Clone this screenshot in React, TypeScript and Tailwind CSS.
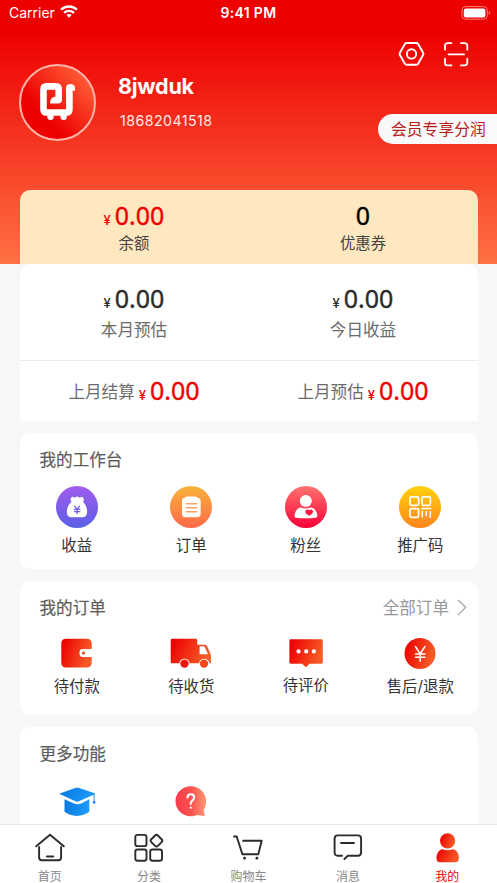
import type { ReactNode } from "react";

const latin = "font-['Inter','Noto_Sans_CJK_SC',sans-serif]";

function RedGradient({ id }: { id: string }) {
  return (
    <defs>
      <linearGradient id={id} x1="0" y1="0" x2="1" y2="0.3">
        <stop offset="0.1" stopColor="#ec0303" />
        <stop offset="1" stopColor="#f75a26" />
      </linearGradient>
    </defs>
  );
}

function VerticalGradient({ id, from, to }: { id: string; from: string; to: string }) {
  return (
    <defs>
      <linearGradient id={id} x1="0" y1="0" x2="0" y2="1">
        <stop offset="0" stopColor={from} />
        <stop offset="1" stopColor={to} />
      </linearGradient>
    </defs>
  );
}

function StatusBar() {
  return (
    <div className="grid h-[25px] grid-cols-3 items-center text-[14px] leading-[25px]">
      <div className="flex items-center gap-[5px] pl-[9px]">
        <span>Carrier</span>
        <svg width="18" height="13" viewBox="0 0 18 13" fill="none" stroke="#fff" className="-mt-[2px]">
          <path d="M1 4.7C5.4.4 12.6.4 17 4.7" strokeWidth="2.3" />
          <path d="M4 7.9c2.8-2.7 7.2-2.7 10 0" strokeWidth="2.2" />
          <path d="M9 12.8 6.3 10c1.5-1.5 3.9-1.5 5.4 0z" fill="#fff" stroke="none" />
        </svg>
      </div>
      <div className="text-center font-semibold tracking-[0.3px]">9:41 PM</div>
      <div className="flex justify-end pr-[6px]">
        <svg width="30" height="14" viewBox="0 0 30 14">
          <rect x="0.9" y="0.6" width="25.4" height="12.6" rx="3.8" fill="none" stroke="#ff8078" strokeWidth="1" />
          <rect x="2.8" y="2.4" width="21.6" height="9" rx="2.2" fill="#fff" />
          <path d="M27.8 4.8c1.8.6 1.8 3.6 0 4.2z" fill="#ff8078" />
        </svg>
      </div>
    </div>
  );
}

function Avatar() {
  return (
    <svg width="77" height="77" viewBox="0 0 77 77">
      <defs>
        <linearGradient id="avatar" x1="0.2" y1="0.75" x2="0.85" y2="0.15">
          <stop offset="0.15" stopColor="#ed0000" />
          <stop offset="1" stopColor="#ff5a35" />
        </linearGradient>
      </defs>
      <circle cx="38.5" cy="38.5" r="37.5" fill="url(#avatar)" stroke="#ffb5ab" strokeWidth="2" />
      <path
        d="M50.400 24V45.500q0 3-3 3H27.500q-3 0-3-3V25.400q0-3 3-3h9.200q3 0 3 3v9.600"
        fill="none"
        stroke="#fff"
        strokeWidth="6.600"
      />
      <path d="M31 39.400c0-4.600 2.300-6.600 6-6.600h6v2.600c0 2.600-1.300 4-4 4z" fill="#fff" />
      <path d="M47.100 26.500v-3.500c0-4 8.900-4.600 8.900 1.200v2.600z" fill="#fff" />
      <circle cx="31.500" cy="52.800" r="3.200" fill="#fff" />
      <circle cx="44.700" cy="52.800" r="3.200" fill="#fff" />
    </svg>
  );
}

function Header() {
  return (
    <header className="h-[190px] text-white">
      <StatusBar />
      <div className="flex justify-between">
        <div className="flex pt-[39px] pl-[19px]">
          <Avatar />
          <div className="pl-[22px]">
            <div className="pt-[9px] text-[21.6px] leading-[26px] font-bold tracking-[-0.3px]">8jwduk</div>
            <div className="pt-[12px] pl-[2px] text-[14.2px] leading-[20px] tracking-[0.45px] text-white/90">18682041518</div>
          </div>
        </div>
        <div className="flex flex-col items-end">
          <div className="flex gap-[18px] pt-[16px] pr-[28px]">
            <svg width="27" height="26" viewBox="0 0 27 26" fill="none" stroke="#fff" strokeWidth="1.900">
              <path d="M8.600 2h9.800c.8 0 1.300.3 1.700 1l5 8.800c.5.800.5 1.500 0 2.300l-5 8.600c-.4.700-.9 1-1.700 1H8.600c-.8 0-1.300-.3-1.700-1l-5-8.600c-.5-.8-.5-1.500 0-2.300L6.900 3c.4-.7.900-1 1.700-1z" />
              <circle cx="13.500" cy="12.900" r="4.700" />
            </svg>
            <svg width="26" height="26" viewBox="0 0.300 26 26" fill="none" stroke="#fff" strokeWidth="1.800" strokeLinecap="round">
              <path d="M2 9V5a2.500 2.500 0 0 1 2.500-2.500H8.500M18 2.500h3.800A2.500 2.500 0 0 1 24.300 5v4M24.300 18v4.200a2.500 2.500 0 0 1-2.500 2.500H18M8.500 24.700h-4A2.500 2.500 0 0 1 2 22.200V18M5.500 13.600h15.600" />
            </svg>
          </div>
          <div className="mt-[47px] h-[30px] w-[119px] rounded-l-full bg-[#f9f9f9] pt-px pl-[13px] text-[15.8px] leading-[30px] whitespace-nowrap text-[#b71c1c]">
            会员专享分润
          </div>
        </div>
      </div>
    </header>
  );
}

function Amount({ value = "0.00", yen = true }: { value?: string; yen?: boolean }) {
  return (
    <span className="-mt-px inline-flex h-[31px] items-baseline">
      {yen && <span className="mr-[4px] text-[13px] leading-none font-medium">¥</span>}
      <span className="font-['Noto_Sans',sans-serif] text-[25px] leading-[30px] [-webkit-text-stroke:0.35px]">{value}</span>
    </span>
  );
}

function Balance() {
  return (
    <div className="mx-[19.5px] grid h-[74px] grid-cols-2 rounded-t-[10px] bg-[#ffe7bf] pt-[11px] text-center">
      <div className="flex flex-col items-center text-[#ee0000]">
        <Amount />
        <div className="text-[15.4px] leading-[26px] text-[#444]">余额</div>
      </div>
      <div className="flex flex-col items-center text-black">
        <Amount value="0" yen={false} />
        <div className="text-[15.4px] leading-[26px] text-[#444]">优惠券</div>
      </div>
    </div>
  );
}

function Earnings() {
  return (
    <section className="mx-[19.5px] h-[157px] rounded-t-[10px] bg-white">
      <div className="grid h-[97px] grid-cols-2 border-b border-[#eaeaea] pt-[20px] text-center">
        {["本月预估", "今日收益"].map((label) => (
          <div key={label} className="flex flex-col items-center text-[#2c2c2c]">
            <Amount />
            <div className="text-[16.6px] leading-[33px] text-[#6b6b6b]">{label}</div>
          </div>
        ))}
      </div>
      <div className="grid grid-cols-2 pt-[15px]">
        {["上月结算", "上月预估"].map((label) => (
          <div key={label} className="flex justify-center text-[#f00000]">
            <span className="mr-[4px] text-[16.6px] leading-[33px] text-[#6b6b6b]">{label}</span>
            <Amount />
          </div>
        ))}
      </div>
    </section>
  );
}

function Card({ title, extra, className, children }: { title: string; extra?: ReactNode; className: string; children: ReactNode }) {
  return (
    <section className={`mx-[19.5px] mt-3 shrink-0 rounded-[10px] bg-white ${className}`}>
      <div className="flex h-[53px] items-center justify-between pr-[10.500px] pl-[20px]">
        <h2 className="text-[16.6px] leading-[24px] text-[#5c5c5c] [-webkit-text-stroke:0.2px]">{title}</h2>
        {extra}
      </div>
      <div className="grid grid-cols-4">{children}</div>
    </section>
  );
}

function Item({ label, className = "", children }: { label: string; className?: string; children: ReactNode }) {
  return (
    <div className={`flex flex-col items-center text-[15.4px] leading-[25px] text-[#333] ${className}`}>
      {children}
      <span>{label}</span>
    </div>
  );
}

function Workbench() {
  return (
    <Card title="我的工作台" className="h-[136px]">
      <Item label="收益" className="gap-[5px]">
        <svg width="42" height="42" viewBox="0 0 42 42">
          <VerticalGradient id="income" from="#a15ced" to="#5b5fe6" />
          <circle cx="21" cy="21" r="21" fill="url(#income)" />
          <path d="M15.500 15.800c-1.700-1.500-.9-4.700 1.200-5 .8 0 1.100.9 1.900.9.900 0 1.100-1.200 2.600-1.200s1.700 1.200 2.600 1.200c.8 0 1.100-.9 1.900-.9 2.100.3 2.900 3.500 1.200 5 3.200 3.200 4.600 7.200 4.100 11.500-.3 2.800-2.200 3.900-4.500 3.900H15.300c-2.300 0-4-1.100-4.400-3.900-.5-4.300 1.200-8.300 4.600-11.500z" fill="#fff" />
          <path d="M18.400 19.800l2.700 3.500 2.700-3.500M17.900 23.300h6.400M17.900 25.600h6.400M21.100 23.300v4.800" fill="none" stroke="#755ee9" strokeWidth="1.300" />
        </svg>
      </Item>
      <Item label="订单" className="gap-[5px]">
        <svg width="42" height="42" viewBox="0 0 42 42">
          <VerticalGradient id="order" from="#f7b43c" to="#ff6848" />
          <circle cx="21" cy="21" r="21" fill="url(#order)" />
          <path d="M15 11.700c.5-.9 1.200-1.300 2.200-1.300h7.900c1 0 1.700.4 2.200 1.300 2.200 0 3.400 1.400 3.400 3.400v13c0 2-1.200 3.200-3.200 3.200H15.200c-2 0-3.200-1.200-3.200-3.200v-13c0-2 1-3.400 3-3.400z" fill="#fff" />
          <path d="M15.700 17.700h11.500M15.700 21.700h11.500M15.700 25.700h11.500" stroke="#ffa067" strokeWidth="1.500" />
        </svg>
      </Item>
      <Item label="粉丝" className="gap-[5px]">
        <svg width="42" height="42" viewBox="0 0 42 42">
          <VerticalGradient id="fans" from="#ff746e" to="#fa0038" />
          <circle cx="21" cy="21" r="21" fill="url(#fans)" />
          <circle cx="20.800" cy="15" r="6" fill="#fff" />
          <path d="M15 21.600c1.700-.4 2.100.9 5.800.9s4.200-1.300 5.800-.9c3.400 1 5.500 4.400 5.800 7.900.1 1.400-1 2.200-2.300 2.300-6 .7-12.600.7-18.600 0-1.300-.1-2.200-.9-2-2.300.4-3.500 2.300-6.900 5.500-7.900z" fill="#fff" />
          <path d="M24.200 29.800c-2.500-1.200-3.900-2.600-3.900-4.300 0-2 2.600-2.600 3.900-1.200 1.400-1.400 3.800-.8 3.800 1.200 0 1.700-1.500 3.200-3.800 4.300z" fill="#fb1742" />
        </svg>
      </Item>
      <Item label="推广码" className="gap-[5px]">
        <svg width="42" height="42" viewBox="0 0 42 42">
          <VerticalGradient id="code" from="#ffd20c" to="#ff831c" />
          <circle cx="21" cy="21" r="21" fill="url(#code)" />
          <g fill="none" stroke="#fff" strokeWidth="1.700">
            <rect x="11" y="10.900" width="8.600" height="8.400" rx="1.500" />
            <rect x="23" y="10.900" width="8.400" height="8.400" rx="1.500" />
            <rect x="11" y="22.600" width="8.600" height="8.700" rx="1.500" />
            <path d="M22.700 22.600h9M23.300 25.600v5.500M27.300 25.600v3.800M31.300 25.600v5.700" strokeWidth="1.500" strokeLinecap="round" />
          </g>
        </svg>
      </Item>
    </Card>
  );
}

function Orders() {
  return (
    <Card
      title="我的订单"
      className="h-[134px]"
      extra={
        <div className="flex items-center gap-[8px] text-[16.6px] leading-[24px] text-[#999]">
          全部订单
          <svg width="10" height="17" viewBox="0 0 10 17" fill="none" stroke="#aaa" strokeWidth="1.300" className="-mt-px">
            <path d="m1 1 7.800 7.300L1 16" />
          </svg>
        </div>
      }
    >
      <Item label="待付款">
        <svg width="32" height="40" viewBox="0 0 32 40">
          <RedGradient id="wallet" />
          <path d="M5 4.700h20.800c3 0 4.900 1.700 4.900 4.700v5.600H21.500c-2.200 0-3 1.300-3 4s.8 4 3 4h9.200v5.800c0 3-1.900 4.700-4.900 4.700H5c-3 0-4.700-1.700-4.700-4.700V9.400c0-3 1.700-4.700 4.700-4.700z" fill="url(#wallet)" />
          <circle cx="22.500" cy="19" r="1.600" fill="#f24418" />
        </svg>
      </Item>
      <Item label="待收货">
        <svg width="42" height="40" viewBox="0 0 42 40">
          <RedGradient id="truck" />
          <path fillRule="evenodd" d="M2.200 4.700h23.500c.9 0 1.500.6 1.500 1.500v4.500h7.200c1.500 0 2.300.5 2.900 1.800l3.300 7.800c.3.700.3 1.200.3 2v6.900h-1.600c-.3-6-9.900-6-10.200 0h-9.500c-.3-6-9.900-6-10.200 0H2.200c-.9 0-1.500-.6-1.500-1.500V6.200c0-.9.600-1.500 1.500-1.500zm27.400 7.600v8h8.400l-3.600-8z" fill="url(#truck)" />
          <circle cx="14.500" cy="29.600" r="4.200" fill="#ef180a" />
          <circle cx="34" cy="29.600" r="4.200" fill="#f6471d" />
        </svg>
      </Item>
      <Item label="待评价">
        <svg width="34" height="39" viewBox="0 0 34 39">
          <RedGradient id="comment" />
          <path d="M2 5.200h30.200c1 0 1.600.6 1.600 1.600v21.300c0 1-.6 1.600-1.600 1.600H20.600l-3.700 3.500-3.700-3.500H2c-1 0-1.600-.6-1.600-1.600V6.800c0-1 .6-1.600 1.600-1.600z" fill="url(#comment)" />
          <path d="M9.500 17.400h.01M17.200 17.400h.01M24.900 17.400h.01" stroke="#fff" strokeWidth="4.200" strokeLinecap="round" />
        </svg>
      </Item>
      <Item label="售后/退款">
        <svg width="32" height="40" viewBox="0 0 32 40">
          <RedGradient id="refund" />
          <circle cx="16" cy="19.500" r="15.500" fill="url(#refund)" />
          <path d="m11.500 12.600 4.700 7.200 4.700-7.200M16.200 19.600v7.600M11.500 20h9.400M11.500 23.300h9.400" fill="none" stroke="#fff" strokeWidth="1.600" strokeLinecap="round" />
        </svg>
      </Item>
    </Card>
  );
}

function More() {
  return (
    <Card title="更多功能" className="h-[140px]">
      <Item label="">
        <svg width="38" height="40" viewBox="0 0 38 40">
          <defs>
            <linearGradient id="school" x1="0" y1="0" x2="1" y2="0.2">
              <stop offset="0" stopColor="#0878df" />
              <stop offset="1" stopColor="#1b9af9" />
            </linearGradient>
          </defs>
          <path d="M1.200 13.800 16.500 8.200c1.900-.6 3.400-.6 5.300 0l15 5.100-.1.900-15.200 6.900c-1.700.7-3 .7-4.700 0z" fill="url(#school)" />
          <path d="M6.500 19.200l9.600 4.200c2.400 1 4.600 1 7 0l8.200-4.200v12.600c-6.700 5.500-18.200 5.500-24.800 0z" fill="url(#school)" />
          <path d="M36.100 14v8" stroke="#1687eb" strokeWidth=".9" />
          <path d="m36.100 20.500 1.700 1.900-1.700 1.700-1.700-1.700z" fill="#1687eb" />
        </svg>
      </Item>
      <Item label="">
        <svg width="32" height="40" viewBox="0 0 32 40">
          <defs>
            <linearGradient id="question" x1="0" y1="0" x2="1" y2="0">
              <stop offset="0" stopColor="#fa3c4d" />
              <stop offset="0.5" stopColor="#fa514e" />
              <stop offset="1" stopColor="#ff9873" />
            </linearGradient>
          </defs>
          <path d="M15.800 6.200c8.600 0 15.300 6.700 15.300 15 0 3.600-1 6.700-2.500 9l1.200 4.800c.1.700-.3 1-.9.900l-6.700-1c-2 .9-4.100 1.300-6.400 1.300C7.200 36.200.5 29.500.5 21.200s6.700-15 15.300-15z" fill="url(#question)" />
          <path d="M12.500 17.400c0-2.200 1.300-3.200 3.300-3.200s3.300 1.200 3.300 3.200c0 2.700-3.400 3-3.400 6.600M15.700 27.500v.3" fill="none" stroke="#fff" strokeWidth="2.100" strokeLinecap="round" />
        </svg>
      </Item>
    </Card>
  );
}

function TabBar() {
  const stroke = { fill: "none", stroke: "#2b2b2b", strokeWidth: 1.9, strokeLinecap: "round" as const, strokeLinejoin: "round" as const };
  const tabs: { label: string; icon: ReactNode }[] = [
    { label: "首页", icon: <path {...stroke} d="M2.200 13.300 16 1.800l13.800 11.500M5.100 14v10.500c0 1.700 1 2.700 2.700 2.700h16.600c1.700 0 2.700-1 2.700-2.700V14M12.900 23.500h6.400" /> },
    {
      label: "分类",
      icon: (
        <g {...stroke}>
          <rect x="2.300" y="1.900" width="11.200" height="11.200" rx="2.200" />
          <rect x="2.300" y="16.500" width="11.200" height="11.200" rx="2.200" />
          <rect x="17.200" y="16.500" width="11.800" height="11.200" rx="2.200" />
          <rect x="18.800" y="3" width="9.300" height="9.300" rx="2" transform="rotate(45 23.450 7.650)" />
        </g>
      ),
    },
    {
      label: "购物车",
      icon: (
        <g>
          <path {...stroke} d="M2 3.500h2.700l5.700 17.800h15.900l3.400-13.600H11.200" />
          <circle cx="12.600" cy="25.200" r="1.400" fill="#2b2b2b" />
          <circle cx="24.900" cy="25.200" r="1.400" fill="#2b2b2b" />
        </g>
      ),
    },
    { label: "消息", icon: <path {...stroke} d="M10 22.700H5.800c-2 0-3.200-1.200-3.200-3.200V5.600c0-2 1.200-3.200 3.200-3.200h20.100c2 0 3.200 1.200 3.200 3.200v13.900c0 2-1.200 3.200-3.200 3.200H15.800L12.400 26M9 10h13" /> },
    {
      label: "我的",
      icon: (
        <g>
          <RedGradient id="me" />
          <circle cx="16.600" cy="7.800" r="7.600" fill="url(#me)" />
          <path d="M11.600 16.200c2.900 1.300 7.200 1.300 10.100 0 4 .5 6.200 4.300 6.200 8.800 0 2.900-1.200 4.200-3.500 4.200H8.900c-2.300 0-3.400-1.300-3.400-4.200 0-4.500 2.200-8.300 6.100-8.800z" fill="url(#me)" />
        </g>
      ),
    },
  ];
  return (
    <nav className="grid h-[59px] shrink-0 grid-cols-5 border-t border-[#e6e6e6] bg-white">
      {tabs.map(({ label, icon }) => (
        <div key={label} className="flex flex-col items-center pt-[8px]">
          <svg width="32" height="30" viewBox="0 0 32 30" className="shrink-0">
            {icon}
          </svg>
          <span className={`pt-[5px] text-[12px] leading-[18px] ${label === "我的" ? "text-[#ee0000]" : "text-[#888]"}`}>{label}</span>
        </div>
      ))}
    </nav>
  );
}

export default function App() {
  return (
    <div className={`flex h-[883px] w-[497px] flex-col overflow-hidden bg-[#f7f7f7] ${latin}`}>
      <main className="h-[824px] overflow-hidden">
        <div className="h-[264px] bg-[linear-gradient(180deg,#ed0000_0%,#ed0000_12%,#ff7145_100%)]">
          <Header />
          <Balance />
        </div>
        <Earnings />
        <Workbench />
        <Orders />
        <More />
      </main>
      <TabBar />
    </div>
  );
}
